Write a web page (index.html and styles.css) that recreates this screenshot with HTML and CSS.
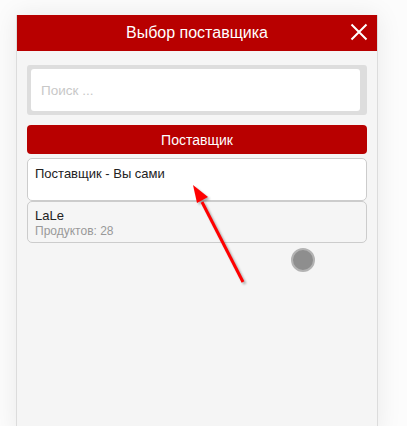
FILE: index.html
```html
<!DOCTYPE html>
<html lang="ru">
<head>
<meta charset="utf-8">
<title>Выбор поставщика</title>
<link rel="stylesheet" href="styles.css">
</head>
<body>
<div class="panel">
  <div class="header">
    <span class="title">Выбор поставщика</span>
    <span class="close">
      <svg width="18" height="18" viewBox="0 0 18 18"><path d="M1.5 1.5 L16.5 16.5 M16.5 1.5 L1.5 16.5" stroke="#fff" stroke-width="2" fill="none"/></svg>
    </span>
  </div>
  <div class="content">
    <div class="search">
      <div class="search-input">Поиск ...</div>
    </div>
    <div class="section-btn">Поставщик</div>
    <div class="list">
      <div class="item item-active">
        <div class="item-title">Поставщик - Вы сами</div>
        <div class="item-sub">&nbsp;</div>
      </div>
      <div class="item">
        <div class="item-title">LaLe</div>
        <div class="item-sub">Продуктов: 28</div>
      </div>
    </div>
  </div>
</div>
<svg class="arrow" width="80" height="120" viewBox="0 0 80 120">
  <defs>
    <filter id="sh" x="-50%" y="-50%" width="200%" height="200%">
      <feGaussianBlur stdDeviation="1"/>
    </filter>
  </defs>
  <g transform="translate(2,2)" opacity="0.45" filter="url(#sh)">
    <line x1="22" y1="26" x2="63" y2="106" stroke="#555" stroke-width="3"/>
    <polygon points="13,9 28,21 17,27" fill="#555"/>
  </g>
  <line x1="22" y1="26" x2="63" y2="106" stroke="#ff0000" stroke-width="3"/>
  <polygon points="13,9 28,21 17,27" fill="#ff0000"/>
</svg>
<div class="dot"></div>
</body>
</html>
```

FILE: styles.css
```css
html, body {
  margin: 0;
  padding: 0;
  background: #fcfcfc;
  font-family: "Liberation Sans", Arial, sans-serif;
}
body {
  position: relative;
  width: 407px;
  height: 426px;
  overflow: hidden;
}
.panel {
  margin: 15px 0 0 16px;
  width: 360px;
  height: 420px;
  border-left: 1px solid #dcdcdc;
  border-right: 1px solid #dcdcdc;
  background: #f5f5f5;
  box-shadow: 0 0 24px rgba(0, 0, 0, 0.08);
}
.header {
  height: 36px;
  background: #b80000;
  display: flex;
  align-items: center;
  justify-content: center;
  position: relative;
}
.title {
  color: #fff;
  font-size: 16px;
}
.close {
  position: absolute;
  right: 9px;
  top: 8px;
  width: 18px;
  height: 18px;
  display: flex;
}
.content {
  padding: 14px 10px 0 10px;
}
.search {
  background: #dddddd;
  border-radius: 3px;
  padding: 4px 7px 4px 4px;
}
.search-input {
  background: #fff;
  border-radius: 3px;
  height: 42px;
  padding-left: 10px;
  display: flex;
  align-items: center;
  color: #c8c8c8;
  font-size: 13.5px;
}
.section-btn {
  margin-top: 10px;
  height: 29px;
  background: #b80000;
  border-radius: 4px;
  color: #fff;
  font-size: 14px;
  display: flex;
  align-items: center;
  justify-content: center;
}
.list {
  margin-top: 4px;
  display: flex;
  flex-direction: column;
}
.item {
  border: 1px solid #cccccc;
  border-radius: 5px;
  background: #f5f5f5;
  padding: 6px 7px 4px 7px;
  height: 42px;
  box-sizing: border-box;
}
.item-active {
  background: #fff;
  height: 43px;
  padding-top: 7px;
}
.item-title {
  color: #222;
  font-size: 13px;
  line-height: 16px;
}
.item-sub {
  color: #999;
  font-size: 12px;
  line-height: 14px;
}
.arrow {
  position: absolute;
  left: 180px;
  top: 176px;
}
.dot {
  position: absolute;
  left: 291px;
  top: 248px;
  width: 20px;
  height: 20px;
  border-radius: 50%;
  background: #8e8e8e;
  border: 2px solid #b3b3b3;
}
```
